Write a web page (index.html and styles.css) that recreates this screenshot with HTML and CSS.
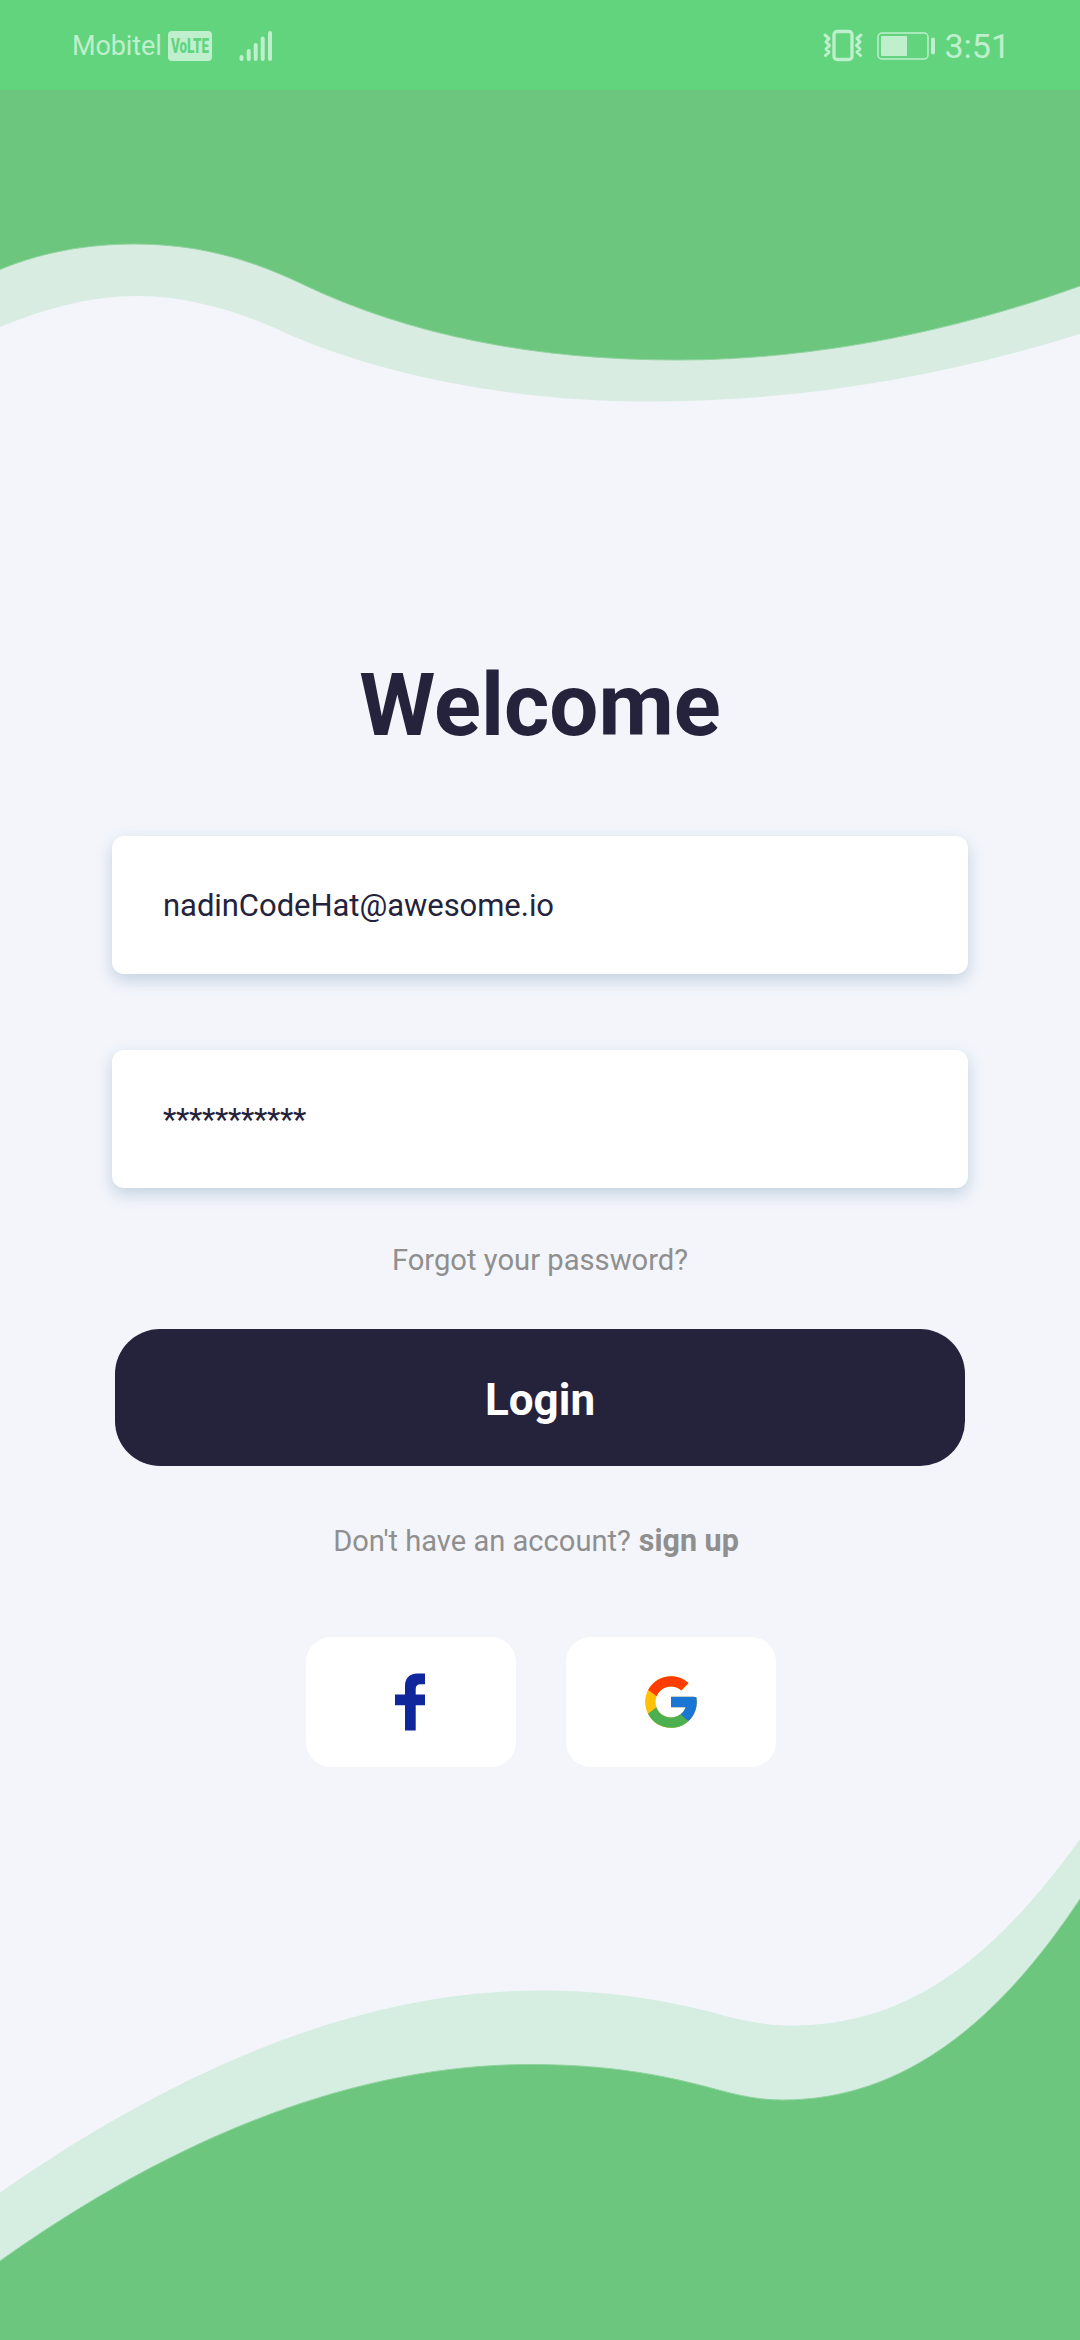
FILE: index.html
```html
<!DOCTYPE html>
<html lang="en">
<head>
<meta charset="utf-8">
<title>Welcome</title>
<link rel="stylesheet" href="styles.css">
</head>
<body>
<div class="screen">
  <svg class="waves" viewBox="0 0 1080 2340" aria-hidden="true">
    <path class="wave-soft-top" d="M0 0V327C44 309 90 296 138 296C192 296 246 314 290 335C390 378 520 401.500 650 401.500C800 401.500 945 376 1080 334V0Z"/>
    <path class="wave-main" d="M-4 -4V271.200L0 269.500C42 252 88 244 134 244C192 244 243 256 300 283C412 337 540 360 678 360C815 360 955 331 1080 286L1084 284.500V-4Z"/>
    <path class="wave-soft-bottom" d="M0 2340V2192.500C190 2060 370 1990.500 540 1990.500C613 1990.500 662 2000 715 2013C741 2021 767 2025.500 793 2025.500C915 2025.500 1000 1950 1080 1839V2340Z"/>
    <path class="wave-main" d="M-4 2344V2264L0 2261C180 2133 360 2064.500 530 2064.500C605 2064.500 660 2074 715 2089C740 2096 760 2100 783 2100C905 2100 1000 2020 1080 1899L1084 1893V2344Z"/>
  </svg>

  <header class="status">
    <div class="status-group">
      <span class="carrier">Mobitel</span>
      <svg class="volte" width="44" height="30" viewBox="0 0 44 30">
        <rect class="glyph" width="44" height="30" rx="4"/>
        <text class="volte-text" x="3" y="21.500" textLength="38" lengthAdjust="spacingAndGlyphs">VoLTE</text>
      </svg>
      <svg class="signal" width="34" height="32" viewBox="0 0 34 32">
        <path class="line" stroke-width="4" d="M2.500 27V29M9.700 21V29M16.700 15V29M23.700 8.500V29M31 3V29"/>
      </svg>
    </div>
    <div class="status-group">
      <svg class="vibrate" width="42" height="34" viewBox="0 0 42 34">
        <rect class="line" stroke-width="3.300" x="12" y="2.500" width="18" height="28" rx="3"/>
        <path class="line" stroke-width="3" d="M3 6L7 9.500L4 13L7.500 16.500L4 20L7 23L3.500 26.500M39 6L35 9.500L38 13L34.500 16.500L38 20L35 23L38.500 26.500"/>
      </svg>
      <svg class="battery" width="59" height="28" viewBox="0 0 59 28">
        <rect class="line" stroke-width="1.500" x="1" y="1" width="50" height="26" rx="4"/>
        <rect class="glyph" x="4" y="4" width="26" height="20" rx="1"/>
        <rect class="glyph" x="54" y="5.500" width="4" height="17" rx="2"/>
      </svg>
      <span class="clock">3:51</span>
    </div>
  </header>

  <main class="login">
    <h1 class="title">Welcome</h1>
    <div class="field"><span class="email">nadinCodeHat@awesome.io</span></div>
    <div class="field"><span class="password">***********</span></div>
    <p class="forgot">Forgot your password?</p>
    <button class="submit" type="button">Login</button>
    <p class="register"><span>Don't have an account?</span><b class="signup">sign up</b></p>
    <div class="social">
      <button class="provider facebook" type="button" aria-label="Facebook">
        <svg width="30" height="58" viewBox="0 0 30 58"><path fill="#10269b" d="M20.700 57.500V32.300H30V21.500H20.700V16Q20.700 11.200 25.500 11.200H30V.500H22.500C14 .500 10 5.500 10 13V21.500H0V32.300H10V57.500Z"/></svg>
      </button>
      <button class="provider google" type="button" aria-label="Google">
        <svg width="62" height="62" viewBox="0 0 48 48">
          <path fill="#ffc107" d="M43.611 20.083H42V20H24v8h11.303C33.654 32.657 29.223 36 24 36c-6.627 0-12-5.373-12-12s5.373-12 12-12c3.059 0 5.842 1.154 7.961 3.039l5.657-5.657C34.046 6.053 29.268 4 24 4 12.955 4 4 12.955 4 24s8.955 20 20 20 20-8.955 20-20c0-1.341-.138-2.650-.389-3.917Z"/>
          <path fill="#ff3d00" d="M6.306 14.691l6.571 4.819C14.655 15.108 18.961 12 24 12c3.059 0 5.842 1.154 7.961 3.039l5.657-5.657C34.046 6.053 29.268 4 24 4 16.318 4 9.656 8.337 6.306 14.691Z"/>
          <path fill="#4caf50" d="M24 44c5.166 0 9.860-1.977 13.409-5.192l-6.190-5.238C29.211 35.091 26.715 36 24 36c-5.202 0-9.619-3.317-11.283-7.946l-6.522 5.025C9.505 39.556 16.227 44 24 44Z"/>
          <path fill="#1976d2" d="M43.611 20.083H42V20H24v8h11.303c-.792 2.237-2.231 4.166-4.087 5.571l6.193 5.238C36.971 39.205 44 34 44 24c0-1.341-.138-2.650-.389-3.917Z"/>
        </svg>
      </button>
    </div>
  </main>
</div>
</body>
</html>
```

FILE: styles.css
```css
* { box-sizing: border-box; }

body {
  margin: 0;
  background: #f3f5fb;
  font-family: Roboto, "Liberation Sans", sans-serif;
  color: #25233c;
}

.screen {
  position: relative;
  width: 1080px;
  height: 2340px;
  overflow: hidden;
}

/* Decorative waves behind the content */
.waves {
  position: absolute;
  inset: 0;
  z-index: -1;
  width: 1080px;
  height: 2340px;
}
.wave-main { fill: #6cc67d; stroke: #8fd39e; stroke-width: 1; }
.wave-soft-top { fill: #d9ece1; }
.wave-soft-bottom { fill: #d6eee1; }

.status {
  display: flex;
  justify-content: space-between;
  align-items: center;
  height: 90px;
  padding: 2px 70px 0 72px;
  background: #62d47e;
  color: #bfefcc;
}
.status-group { display: flex; align-items: center; }
.glyph { fill: #bfefcc; }
.line { fill: none; stroke: #bfefcc; stroke-linecap: round; stroke-linejoin: round; }
.carrier { font-size: 27px; line-height: 40px; white-space: nowrap; letter-spacing: -0.1px; }
.volte { margin-left: 6px; overflow: visible; }
.volte-text { font-size: 20px; font-weight: 900; fill: #62d47e; }
.signal { margin-left: 27px; }
.battery { margin-left: 13px; }
.clock { margin-left: 8px; font-size: 34px; }

.login {
  display: flex;
  flex-direction: column;
  align-items: center;
}
.title {
  margin: 554px 0 70px;
  font-size: 87px;
  line-height: 122px;
  font-weight: 700;
}
.field {
  display: flex;
  align-items: center;
  width: 856px;
  height: 138px;
  margin-bottom: 76px;
  padding-left: 51px;
  border-radius: 12px;
  background: #fff;
  box-shadow: 0 6px 16px rgba(70, 120, 155, 0.28);
  font-size: 31px;
}
.email { letter-spacing: -0.05px; }
.password { letter-spacing: -0.35px; }
.forgot {
  margin: -23px 0 50px;
  color: #8f8f8f;
  font-size: 29.2px;
  line-height: 38px;
}
.submit {
  width: 850px;
  height: 137px;
  padding: 5px 0 0;
  border: 0;
  border-radius: 45px;
  background: #25233c;
  color: #fff;
  font: 700 44px Roboto, "Liberation Sans", sans-serif;
}
.register {
  display: flex;
  align-items: baseline;
  gap: 8px;
  margin: 55px 8px 76px 0;
  color: #8f8f8f;
  font-size: 29.1px;
  line-height: 39px;
}
.signup { font-size: 30.5px; }
.social { display: flex; gap: 50px; margin-left: 1px; }
.provider {
  display: flex;
  align-items: center;
  justify-content: center;
  width: 210px;
  height: 130px;
  padding: 0;
  border: 0;
  border-radius: 25px;
  background: #fff;
}
.facebook { padding-right: 2px; }
```
